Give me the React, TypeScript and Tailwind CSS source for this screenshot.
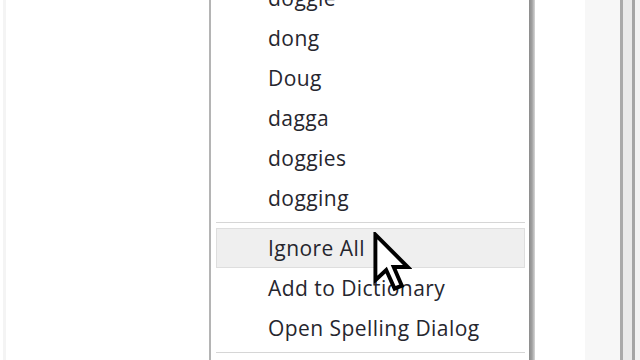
import React from 'react';

const SUGGESTIONS = ['doggie', 'dong', 'Doug', 'dagga', 'doggies', 'dogging'];
const ACTIONS = ['Ignore All', 'Add to Dictionary', 'Open Spelling Dialog'];

const Row: React.FC<{ label: string; active?: boolean }> = ({ label, active }) => (
  <div
    className={`h-10 flex items-center pl-[51px] border ${
      active ? 'bg-[#efefef] border-[#dedede]' : 'border-transparent'
    }`}
  >
    <span className="text-[21px] text-[#26262e] leading-none tracking-[0.45px]">{label}</span>
  </div>
);

const Separator: React.FC = () => (
  <div className="h-[10px] flex flex-col justify-center">
    <div className="h-[2px] bg-[#d6d6d6] border-b border-white" />
  </div>
);

const Cursor: React.FC = () => (
  <svg
    className="absolute left-[373px] top-[232px]"
    width="39"
    height="62"
    viewBox="0 0 13 20.5"
  >
    <polygon
      points="0.8,0.8 0.8,16 4.4,12.6 7.2,18.8 9.6,17.8 6.9,11.6 11.6,11.6"
      fill="#ffffff"
      stroke="#000000"
      strokeWidth="1.3"
      strokeLinejoin="miter"
    />
  </svg>
);

export default function App() {
  return (
    <div
      className="relative w-[640px] h-[360px] overflow-hidden bg-white flex"
      style={{ fontFamily: '"Open Sans", "Noto Sans", sans-serif' }}
    >
      {/* page behind the menu */}
      <div className="w-[209px] shrink-0 flex">
        <div className="w-[3px] ml-[3px] bg-[#f4f4f4]" />
      </div>

      {/* context menu */}
      <div className="w-[326px] shrink-0 flex">
        <div className="w-[2px] bg-[#b4b4b4]" />
        <div className="flex-1 bg-white pl-[5px] pr-[4px] mt-[-22px]">
          {SUGGESTIONS.map((s) => (
            <Row key={s} label={s} />
          ))}
          <Separator />
          {ACTIONS.map((a, i) => (
            <Row key={a} label={a} active={i === 0} />
          ))}
          <Separator />
        </div>
        <div className="w-[6px] bg-gradient-to-r from-[#8c8c8c] via-[#a0a0a0] to-[#d8d8d8]" />
      </div>

      {/* document edge and scrollbar */}
      <div className="flex-1 flex">
        <div className="w-[50px] bg-white" />
        <div className="w-[35px] bg-[#f7f7f7]" />
        <div className="w-[3px] bg-[#a9a9a9]" />
        <div className="w-[9px] bg-[#e9e9e9]" />
        <div className="w-[3px] bg-[#a4a4a4]" />
        <div className="flex-1 bg-[#f2f2f2]" />
      </div>

      <Cursor />
    </div>
  );
}
